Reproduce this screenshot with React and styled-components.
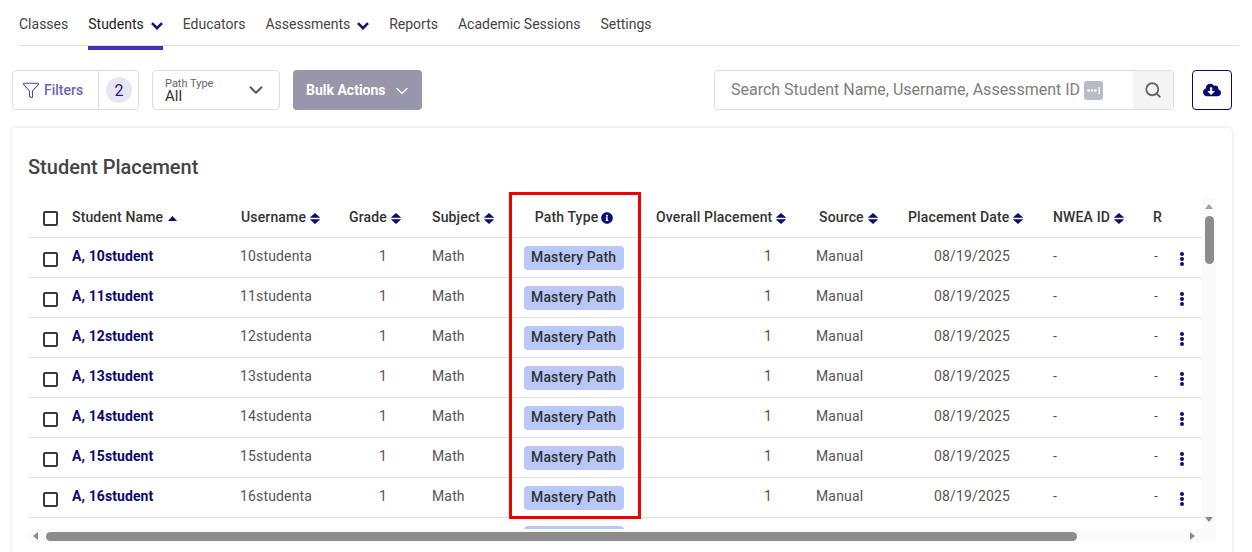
import React from "react";
import styled, { createGlobalStyle } from "styled-components";
import { ChevronDown, Filter, Search } from "lucide-react";
import { FaCloudDownloadAlt, FaInfoCircle } from "react-icons/fa";

const Global = createGlobalStyle`
  html, body { margin: 0; padding: 0; background: #fff; height: 552px; overflow: hidden; }
  body { font-family: Roboto, "Liberation Sans", sans-serif; font-size: 14px; letter-spacing: .15px; }
  * { box-sizing: border-box; }
`;

const Page = styled.div`
  width: 1252px;
  height: 552px;
  overflow: hidden;
  padding: 0 12px;
`;

const Nav = styled.nav`
  display: flex;
  gap: 20px;
  margin: 0 1px 0 7px;
  height: 46px;
  border-bottom: 1px solid #e0e0e0;
  letter-spacing: 0;
`;

const Tab = styled.a`
  display: flex;
  align-items: center;
  gap: 7px;
  align-self: flex-start;
  height: 50px;
  padding-top: 2px;
  color: ${(p) => (p.$active ? "#222" : "#444")};
  border-bottom: 4px solid ${(p) => (p.$active ? "#4a2fbd" : "transparent")};
`;

const NavChevron = styled.svg`
  width: 12px;
  height: 8px;
  margin-top: 3px;
  fill: none;
  stroke: #14126e;
  stroke-width: 2.6;
`;

const Toolbar = styled.div`
  display: flex;
  align-items: stretch;
  height: 40px;
  margin-top: 24px;
`;

const FilterGroup = styled.div`
  display: flex;
  align-items: center;
  width: 127px;
  border: 1px solid #dedede;
  border-radius: 4px;
`;

const FilterLabel = styled.div`
  display: flex;
  align-items: center;
  gap: 4px;
  width: 86px;
  height: 100%;
  padding-left: 9px;
  border-right: 1px solid #dedede;
  color: #6f63b6;
  font-weight: 500;
  letter-spacing: 0;
  svg { color: #50489c; }
`;

const CountBadge = styled.span`
  margin-left: 7px;
  width: 26px;
  height: 26px;
  border-radius: 50%;
  display: flex;
  align-items: center;
  justify-content: center;
  background: #e7e5f4;
  color: #24226f;
  font-size: 16px;
  letter-spacing: 0;
`;

const PathSelect = styled.div`
  display: flex;
  align-items: center;
  justify-content: space-between;
  width: 128px;
  margin-left: 13px;
  padding: 0 12px 0 12px;
  border: 1px solid #dedede;
  border-radius: 4px;
  svg { color: #555; }
`;

const SelectText = styled.div`
  display: flex;
  flex-direction: column;
  color: #333;
  line-height: 13px;
  font-size: 15px;
  letter-spacing: 0;
  small { font-size: 11px; color: #666; letter-spacing: 0; line-height: 12px; }
`;

const BulkButton = styled.button`
  display: flex;
  align-items: center;
  gap: 6px;
  width: 129px;
  margin-left: 13px;
  padding: 0 0 0 13px;
  border: 0;
  border-radius: 4px;
  background: #9896aa;
  color: #fff;
  font: 700 14px Roboto, sans-serif;
  letter-spacing: 0;
  svg { margin-top: 1px; }
`;

const SearchBox = styled.div`
  display: flex;
  width: 460px;
  margin-left: auto;
  border: 1px solid #dedede;
  border-radius: 4px;
  overflow: hidden;
`;

const SearchText = styled.div`
  flex: 1;
  display: flex;
  align-items: center;
  gap: 4px;
  padding: 0 0 2px 16px;
  color: #7d7d7d;
  font-size: 16px;
  letter-spacing: 0;
`;

const KeyIcon = styled.span`
  width: 19px;
  height: 19px;
  margin-top: 2px;
  border-radius: 3px;
  background: #b6bcc8;
  display: flex;
  align-items: center;
  justify-content: center;
`;

const SearchButton = styled.div`
  width: 40px;
  display: flex;
  align-items: center;
  justify-content: center;
  background: #f4f4f4;
  color: #666;
`;

const DownloadButton = styled.button`
  width: 40px;
  margin: 0 8px 0 18px;
  border: 1px solid #0a0a78;
  border-radius: 4px;
  background: #fff;
  color: #0a0a6e;
  display: flex;
  align-items: center;
  justify-content: center;
  padding: 0;
`;

const Card = styled.section`
  margin: 18px 8px 0 0;
  height: 440px;
  padding: 0 16px;
  border-radius: 4px 4px 0 0;
  box-shadow: 0 0 4px rgba(0, 0, 0, .13);
  background: #fff;
`;

const Title = styled.h2`
  margin: 0;
  padding-top: 27px;
  height: 70px;
  font-size: 20px;
  line-height: 24px;
  font-weight: 500;
  color: #444;
  letter-spacing: 0;
`;

const TableArea = styled.div`
  position: relative;
`;

const ScrollRow = styled.div`
  display: flex;
  height: 331px;
`;

const Clip = styled.div`
  width: 1174px;
  overflow: hidden;
`;

const Table = styled.table`
  width: 1174px;
  table-layout: fixed;
  border-collapse: collapse;
`;

const Th = styled.th`
  height: 39px;
  padding: 0 ${(p) => p.$right || 0}px 0 ${(p) => p.$pad || 0}px;
  border-bottom: 1px solid #e2e2e2;
  text-align: ${(p) => p.$align || "left"};
  font-weight: 500;
  color: #333;
  white-space: nowrap;
  overflow: hidden;
  svg { color: #0a0a78; vertical-align: -1.5px; margin-left: 4px; }
`;

const Td = styled.td`
  height: 40px;
  padding: 0 ${(p) => p.$right || 0}px ${(p) => p.$bottom ?? 2}px ${(p) => p.$pad || 0}px;
  border-bottom: 1px solid #e2e2e2;
  text-align: ${(p) => p.$align || "left"};
  color: #555;
  white-space: nowrap;
`;

const NameLink = styled.a`
  color: #0a0a6e;
  font-weight: 700;
  letter-spacing: .1px;
`;

const Check = styled.span`
  display: block;
  width: 15px;
  height: 15px;
  margin: ${(p) => (p.$row ? "7px" : "3px")} 0 0 15px;
  border: 2px solid #3a3a3a;
  border-radius: 2px;
`;

const Chip = styled.span`
  display: inline-flex;
  align-items: center;
  height: 24px;
  padding: 0 8px 2px 7px;
  margin-top: 2px;
  border-radius: 4px;
  background: #b9c7f9;
  color: #333;
  font-weight: 500;
`;

const Kebab = styled.span`
  display: flex;
  flex-direction: column;
  gap: 1px;
  width: 4px;
  margin: 5px 0 0 6px;
  i { display: block; width: 4px; height: 4px; border-radius: 50%; background: #0a0a78; }
`;

const VTrack = styled.div`
  width: 14px;
  background: #fafafa;
  display: flex;
  flex-direction: column;
  align-items: center;
  padding-top: 6px;
`;

const VThumb = styled.div`
  width: 9px;
  height: 48px;
  margin-top: 7px;
  border-radius: 5px;
  background: #8c8c8c;
`;

const ArrowUp = styled.div`
  width: 0;
  height: 0;
  border-left: 4.5px solid transparent;
  border-right: 4.5px solid transparent;
  border-bottom: 5px solid #a0a0a0;
`;

const ArrowDown = styled(ArrowUp)`
  margin-top: auto;
  margin-bottom: 7px;
  border-bottom: 0;
  border-top: 5px solid #8c8c8c;
`;

const HTrack = styled.div`
  display: flex;
  align-items: center;
  width: 1188px;
  height: 14px;
  background: #fafafa;
  padding: 0 21px 0 5px;
`;

const ArrowLeft = styled.div`
  width: 0;
  height: 0;
  border-top: 4.5px solid transparent;
  border-bottom: 4.5px solid transparent;
  border-right: 5px solid #8c8c8c;
`;

const ArrowRight = styled.div`
  width: 0;
  height: 0;
  margin-left: auto;
  border-top: 4.5px solid transparent;
  border-bottom: 4.5px solid transparent;
  border-left: 5px solid #8c8c8c;
`;

const HThumb = styled.div`
  width: 1031px;
  height: 9px;
  margin-left: 8px;
  border-radius: 5px;
  background: #8c8c8c;
`;

const Highlight = styled.div`
  position: absolute;
  left: 481px;
  top: -6px;
  width: 132px;
  height: 327px;
  border: 3px solid #f00000;
  pointer-events: none;
`;

const AscIcon = styled.svg`
  &&& { vertical-align: 1.5px; margin-left: 5px; }
`;

const InfoIcon = styled(FaInfoCircle)`
  &&& { margin-left: 3px; }
`;

const SortBoth = () => (
  <svg width="10" height="11" viewBox="0 0 10 11" fill="currentColor">
    <path d="M5 0 L9.8 4.2 Q10 4.8 9.4 4.8 H.6 Q0 4.8 .2 4.2 Z" />
    <path d="M.6 6.2 H9.4 Q10 6.2 9.8 6.8 L5 11 L.2 6.8 Q0 6.2 .6 6.2 Z" />
  </svg>
);

const SortAsc = () => (
  <AscIcon width="9" height="5" viewBox="0 0 9 5" fill="currentColor">
    <path d="M4.5 0 L9 5 H0 Z" />
  </AscIcon>
);

const Chevron = () => (
  <NavChevron viewBox="0 0 12 8">
    <path d="M1 1.2 L6 6.2 L11 1.2" />
  </NavChevron>
);

const widths = [36, 168, 108, 82, 88, 130, 168, 92, 145, 100, 29, 28];
const students = [10, 11, 12, 13, 14, 15, 16, 17];

export default function App() {
  return (
    <Page>
      <Global />
      <Nav>
        <Tab>Classes</Tab>
        <Tab $active>Students <Chevron /></Tab>
        <Tab>Educators</Tab>
        <Tab>Assessments <Chevron /></Tab>
        <Tab>Reports</Tab>
        <Tab>Academic Sessions</Tab>
        <Tab>Settings</Tab>
      </Nav>
      <Toolbar>
        <FilterGroup>
          <FilterLabel><Filter size={18} strokeWidth={1.4} />Filters</FilterLabel>
          <CountBadge>2</CountBadge>
        </FilterGroup>
        <PathSelect>
          <SelectText><small>Path Type</small>All</SelectText>
          <ChevronDown size={22} strokeWidth={2} />
        </PathSelect>
        <BulkButton>Bulk Actions <ChevronDown size={20} strokeWidth={1.5} /></BulkButton>
        <SearchBox>
          <SearchText>
            Search Student Name, Username, Assessment ID
            <KeyIcon>
              <svg width="15" height="9" viewBox="0 0 15 9">
                <circle cx="2.5" cy="4.5" r="1.25" fill="#fff" />
                <circle cx="6" cy="4.5" r="1.25" fill="#fff" />
                <circle cx="9.5" cy="4.5" r="1.25" fill="#fff" />
                <rect x="12.5" y="1" width="1.3" height="7" fill="#fff" />
              </svg>
            </KeyIcon>
          </SearchText>
          <SearchButton><Search size={18} strokeWidth={2.5} /></SearchButton>
        </SearchBox>
        <DownloadButton><FaCloudDownloadAlt size={18} /></DownloadButton>
      </Toolbar>
      <Card>
        <Title>Student Placement</Title>
        <TableArea>
          <ScrollRow>
            <Clip>
              <Table>
                <colgroup>
                  {widths.map((w, i) => <col key={i} width={w} />)}
                </colgroup>
                <thead>
                  <tr>
                    <Th><Check /></Th>
                    <Th $pad={8}>Student Name<SortAsc /></Th>
                    <Th $pad={9}>Username<SortBoth /></Th>
                    <Th $pad={9}>Grade<SortBoth /></Th>
                    <Th $pad={10}>Subject<SortBoth /></Th>
                    <Th $align="center" $right={2}>Path Type<InfoIcon size={12} /></Th>
                    <Th $pad={16}>Overall Placement<SortBoth /></Th>
                    <Th $pad={11}>Source<SortBoth /></Th>
                    <Th $pad={8}>Placement Date<SortBoth /></Th>
                    <Th $pad={8}>NWEA ID<SortBoth /></Th>
                    <Th $pad={8}>R</Th>
                    <Th />
                  </tr>
                </thead>
                <tbody>
                  {students.map((n) => (
                    <tr key={n}>
                      <Td><Check $row /></Td>
                      <Td $pad={8}><NameLink>A, {n}student</NameLink></Td>
                      <Td $pad={8}>{n}studenta</Td>
                      <Td $pad={39}>1</Td>
                      <Td $pad={10}>Math</Td>
                      <Td $pad={14} $bottom={0}><Chip>Mastery Path</Chip></Td>
                      <Td $align="right" $right={36}>1</Td>
                      <Td $pad={8}>Manual</Td>
                      <Td $pad={34}>08/19/2025</Td>
                      <Td $pad={8}>-</Td>
                      <Td $pad={9}>-</Td>
                      <Td><Kebab><i /><i /><i /></Kebab></Td>
                    </tr>
                  ))}
                </tbody>
              </Table>
            </Clip>
            <VTrack>
              <ArrowUp />
              <VThumb />
              <ArrowDown />
            </VTrack>
          </ScrollRow>
          <HTrack>
            <ArrowLeft />
            <HThumb />
            <ArrowRight />
          </HTrack>
          <Highlight />
        </TableArea>
      </Card>
    </Page>
  );
}
